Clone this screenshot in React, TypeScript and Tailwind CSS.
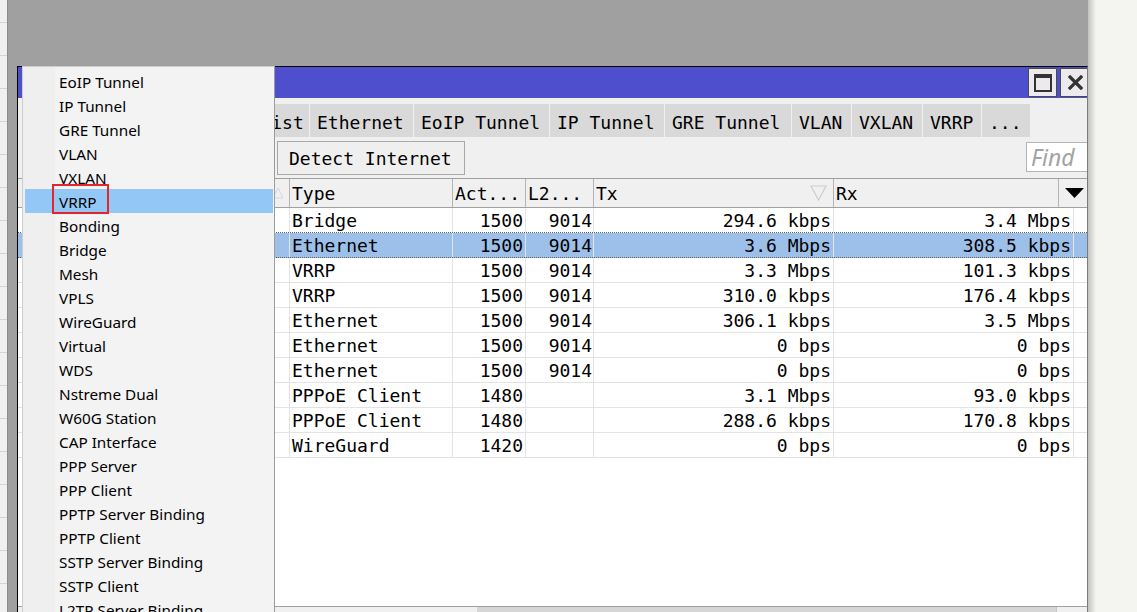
import React from 'react';

const MENU_ITEMS = [
  'EoIP Tunnel',
  'IP Tunnel',
  'GRE Tunnel',
  'VLAN',
  'VXLAN',
  'VRRP',
  'Bonding',
  'Bridge',
  'Mesh',
  'VPLS',
  'WireGuard',
  'Virtual',
  'WDS',
  'Nstreme Dual',
  'W60G Station',
  'CAP Interface',
  'PPP Server',
  'PPP Client',
  'PPTP Server Binding',
  'PPTP Client',
  'SSTP Server Binding',
  'SSTP Client',
  'L2TP Server Binding',
];

// first tab is fully covered by the popup menu, so it carries no label
const TABS = [
  { label: '', w: 'w-[112px]', pl: 'pl-[7px]' },
  { label: 'Interface List', w: 'w-[166px]', pl: 'pl-[9px]' },
  { label: 'Ethernet', w: 'w-[103px]', pl: 'pl-[7px]' },
  { label: 'EoIP Tunnel', w: 'w-[135px]', pl: 'pl-[7px]' },
  { label: 'IP Tunnel', w: 'w-[114px]', pl: 'pl-[7px]' },
  { label: 'GRE Tunnel', w: 'w-[126px]', pl: 'pl-[7px]' },
  { label: 'VLAN', w: 'w-[59px]', pl: 'pl-[7px]' },
  { label: 'VXLAN', w: 'w-[70px]', pl: 'pl-[7px]' },
  { label: 'VRRP', w: 'w-[58px]', pl: 'pl-[7px]' },
  { label: '...', w: 'w-[48px]', pl: 'pl-[7px]' },
];

interface IfaceRow {
  type: string;
  mtu: string;
  l2: string;
  tx: string;
  rx: string;
}

const ROWS: IfaceRow[] = [
  { type: 'Bridge', mtu: '1500', l2: '9014', tx: '294.6 kbps', rx: '3.4 Mbps' },
  { type: 'Ethernet', mtu: '1500', l2: '9014', tx: '3.6 Mbps', rx: '308.5 kbps' },
  { type: 'VRRP', mtu: '1500', l2: '9014', tx: '3.3 Mbps', rx: '101.3 kbps' },
  { type: 'VRRP', mtu: '1500', l2: '9014', tx: '310.0 kbps', rx: '176.4 kbps' },
  { type: 'Ethernet', mtu: '1500', l2: '9014', tx: '306.1 kbps', rx: '3.5 Mbps' },
  { type: 'Ethernet', mtu: '1500', l2: '9014', tx: '0 bps', rx: '0 bps' },
  { type: 'Ethernet', mtu: '1500', l2: '9014', tx: '0 bps', rx: '0 bps' },
  { type: 'PPPoE Client', mtu: '1480', l2: '', tx: '3.1 Mbps', rx: '93.0 kbps' },
  { type: 'PPPoE Client', mtu: '1480', l2: '', tx: '288.6 kbps', rx: '170.8 kbps' },
  { type: 'WireGuard', mtu: '1420', l2: '', tx: '0 bps', rx: '0 bps' },
];

const SELECTED = 1;

function LeftStrip() {
  return (
    <div className="flex w-[7px] shrink-0 flex-col bg-[#f0f0f0]">
      <div className="h-[23px] shrink-0 border-b border-[#d4d4d4]" />
      {Array.from({ length: 18 }).map((_, i) => (
        <div key={i} className="h-[33px] shrink-0 border-b border-[#d4d4d4]" />
      ))}
    </div>
  );
}

function TitleBar() {
  return (
    <div className="flex h-[31px] shrink-0 items-start justify-end gap-[3px] bg-[#4d4fcc] pt-[1px]">
      <div className="flex h-[29px] w-[29px] items-center justify-center border border-[#4a4a4a] bg-[#edeaee]">
        <div className="h-[18px] w-[18px] border-2 border-t-4 border-[#333]" />
      </div>
      <div className="flex h-[29px] w-[27px] items-center justify-center border border-r-0 border-[#4a4a4a] bg-[#edeaee] pl-[2px]">
        <svg width="15" height="15" viewBox="0 0 15 15">
          <path d="M2 2 L13 13 M13 2 L2 13" stroke="#333" strokeWidth="3.2" strokeLinecap="square" />
        </svg>
      </div>
    </div>
  );
}

function Tabs() {
  return (
    <div className="mt-[6px] flex h-[33px] shrink-0 gap-[1px] pl-[12px]">
      {TABS.map((t, i) => (
        <div
          key={i}
          className={`${t.w} ${t.pl} flex shrink-0 items-center bg-[#d9d9d9] pt-[3px] text-[18px] text-black`}
        >
          {t.label}
        </div>
      ))}
    </div>
  );
}

function Toolbar() {
  return (
    <div className="mt-[4px] flex h-[34px] shrink-0 items-start pl-[259px]">
      <div className="flex h-[34px] w-[188px] items-center border border-[#a8a8a8] bg-[#efefef] pl-[11px] text-[18px] text-black">
        Detect Internet
      </div>
      <div className="ml-auto mt-[1px] flex h-[30px] w-[61px] items-center border border-r-0 border-[#b4b4b4] bg-white pl-[4px] font-['Noto_Sans',sans-serif] text-[23px] italic text-[#a3a3a3]">
        Find
      </div>
    </div>
  );
}

function Header() {
  const cell = 'flex h-full shrink-0 items-center border-r border-[#b4b4b4] pl-[2px]';
  return (
    <div className="mt-[3px] flex h-[30px] shrink-0 border-y border-[#a0a0a0] bg-[#f0f0f0] text-[18px] text-black">
      <div className={`${cell} w-[272px] justify-end pr-[5px]`}>
        <svg width="12" height="12" viewBox="0 0 12 12">
          <path d="M6 1 L11 11 L1 11 Z" fill="none" stroke="#d6d6d6" strokeWidth="1" />
        </svg>
      </div>
      <div className={`${cell} w-[163px]`}>Type</div>
      <div className={`${cell} w-[73px]`}>Act...</div>
      <div className={`${cell} w-[68px]`}>L2...</div>
      <div className={`${cell} w-[240px] justify-between pr-[6px]`}>
        <span>Tx</span>
        <svg width="17" height="16" viewBox="0 0 17 16">
          <path d="M1 1 L16 1 L8.5 15 Z" fill="none" stroke="#cdcdcd" strokeWidth="1.2" />
        </svg>
      </div>
      <div className={`${cell} w-[225px]`}>Rx</div>
      <div className="flex h-full flex-1 items-center justify-center pl-[3px]">
        <svg width="19" height="10" viewBox="0 0 19 10">
          <path d="M0 0 L19 0 L9.5 10 Z" fill="#000" />
        </svg>
      </div>
    </div>
  );
}

function Row({ row, selected, beforeSelected }: { row: IfaceRow; selected: boolean; beforeSelected: boolean }) {
  const line = selected || beforeSelected ? 'border-dotted border-[#606060]' : 'border-[#e3e3e3]';
  const cell = 'flex h-full shrink-0 items-center border-r border-[#e3e3e3]';
  return (
    <div className={`flex h-[25px] shrink-0 border-b ${line} ${selected ? 'bg-[#9cc0e9]' : 'bg-white'} text-[18px] text-black`}>
      <div className={`${cell} w-[272px]`} />
      <div className={`${cell} w-[163px] pl-[2px]`}>{row.type}</div>
      <div className={`${cell} w-[73px] justify-end pr-[2px]`}>{row.mtu}</div>
      <div className={`${cell} w-[68px] justify-end pr-[1px]`}>{row.l2}</div>
      <div className={`${cell} w-[240px] justify-end pr-[2px]`}>{row.tx}</div>
      <div className={`${cell} w-[240px] justify-end pr-[2px]`}>{row.rx}</div>
      <div className="flex-1" />
    </div>
  );
}

function Window() {
  return (
    <div className="flex w-[1071px] shrink-0 flex-col border-l border-t border-r border-black border-r-[#7c7c7c] bg-[#f0f0f0] font-['DejaVu_Sans_Mono',monospace]">
      <TitleBar />
      <Tabs />
      <Toolbar />
      <Header />
      <div className="flex shrink-0 flex-col bg-white">
        {ROWS.map((r, i) => (
          <Row key={i} row={r} selected={i === SELECTED} beforeSelected={i === SELECTED - 1} />
        ))}
      </div>
      <div className="h-[148px] shrink-0 bg-white" />
      <div className="flex h-[17px] shrink-0 border-t border-[#a0a0a0] bg-[#f0f0f0]">
        <div className="w-[459px] shrink-0" />
        <div className="w-[579px] shrink-0 bg-[#d6d6d6]" />
        <div className="flex-1 border-l border-[#c8c8c8]" />
      </div>
    </div>
  );
}

function PopupMenu() {
  return (
    <div className="absolute left-[22px] top-[66px] h-[560px] w-[253px] border border-[#cdcdcd] border-r-[#9c9c9c] bg-[linear-gradient(to_right,#efefef_32px,#f3f3f3_32px)] pt-[2px] font-['Noto_Sans',sans-serif] text-[15.3px] leading-[22px] text-black">
      {MENU_ITEMS.map(item => (
        <div
          key={item}
          className={`ml-[2px] mr-[1px] flex h-[24px] items-center pl-[34px] pt-[1px] ${item === 'VRRP' ? 'bg-[#93c8f6]' : ''}`}
        >
          {item}
        </div>
      ))}
    </div>
  );
}

export default function App() {
  return (
    <div className="relative flex h-[612px] w-[1137px] overflow-hidden bg-[#f4f4f0]">
      <LeftStrip />
      <div className="w-px shrink-0 bg-[#8c8c8c]" />
      <div className="flex w-[1080px] shrink-0 flex-col overflow-hidden bg-[#a0a0a0]">
        <div className="h-[66px] shrink-0" />
        <div className="flex min-h-0 flex-1 pl-[9px]">
          <Window />
        </div>
      </div>
      <div className="flex flex-1">
        <div className="w-[8px] bg-linear-to-r from-[#c2c2c0] to-[#f4f4f0]" />
      </div>
      <PopupMenu />
      {/* annotation box */}
      <div className="absolute left-[52px] top-[184px] h-[30px] w-[57px] border-2 border-[#e2262b]" />
    </div>
  );
}
